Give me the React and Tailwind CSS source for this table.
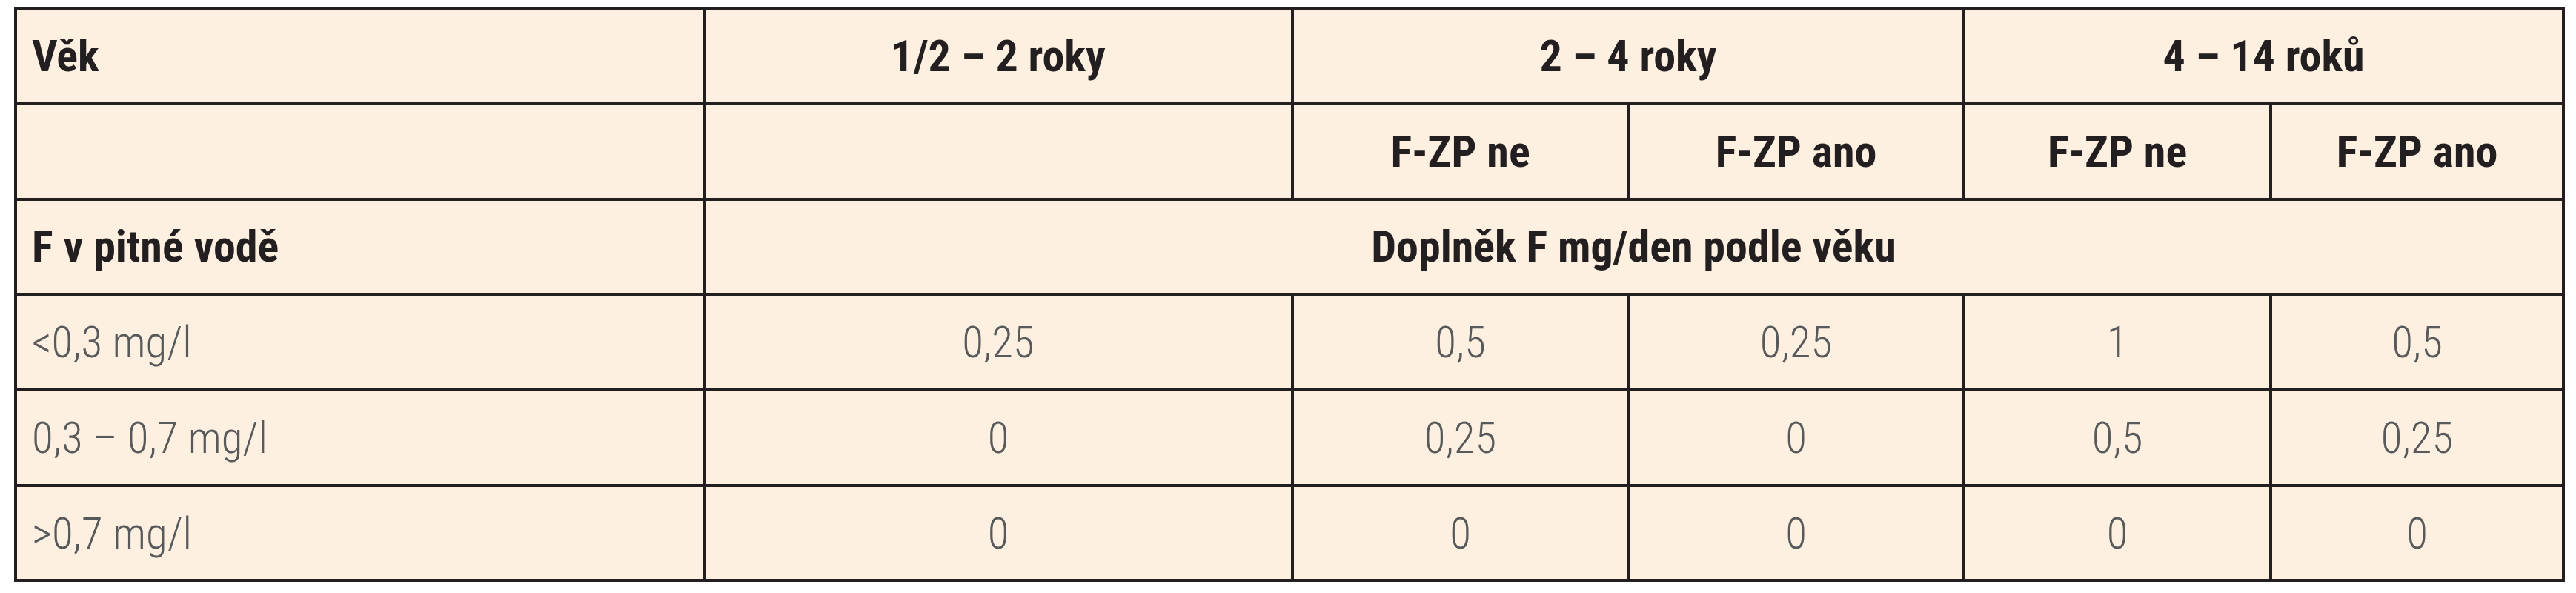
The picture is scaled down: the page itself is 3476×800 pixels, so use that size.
import React from "react";

const H = "flex items-center justify-center bg-[#fdf0e1] text-[#231f20] font-bold text-[60px] leading-none";
const HL = "flex items-center justify-start pl-[20px] bg-[#fdf0e1] text-[#231f20] font-bold text-[60px] leading-none";
const D = "flex items-center justify-center bg-[#fdf0e1] text-[#58595b] font-light text-[59px] leading-none";
const DL = "flex items-center justify-start pl-[20px] bg-[#fdf0e1] text-[#58595b] font-light text-[59px] leading-none";

const rows = [
  ["<0,3 mg/l", "0,25", "0,5", "0,25", "1", "0,5"],
  ["0,3 – 0,7 mg/l", "0", "0,25", "0", "0,5", "0,25"],
  [">0,7 mg/l", "0", "0", "0", "0", "0"],
];

export default function App() {
  return (
    <div className="bg-white w-[3476px] h-[800px] pt-[10px] pl-[19px]" style={{}}>
      <div
        className="grid w-fit bg-[#231f20] p-[4px] gap-[4px] grid-cols-[925px_790px_449px_449px_410px_391px] grid-rows-[124px_125px_124px_125px_125px_124px] font-['Roboto_Condensed','Liberation_Sans',sans-serif]"
      >
        <div className={HL}>Věk</div>
        <div className={H}>1/2 – 2 roky</div>
        <div className={`${H} col-span-2`}>2 – 4 roky</div>
        <div className={`${H} col-span-2`}>4 – 14 roků</div>

        <div className={H}></div>
        <div className={H}></div>
        <div className={H}>F-ZP ne</div>
        <div className={H}>F-ZP ano</div>
        <div className={H}>F-ZP ne</div>
        <div className={H}>F-ZP ano</div>

        <div className={HL}>F v pitné vodě</div>
        <div className={`${H} col-span-5`}>Doplněk F mg/den podle věku</div>

        {rows.map((r, i) => (
          <React.Fragment key={i}>
            <div className={DL}>{r[0]}</div>
            {r.slice(1).map((v, j) => (
              <div key={j} className={D}>{v}</div>
            ))}
          </React.Fragment>
        ))}
      </div>
    </div>
  );
}
